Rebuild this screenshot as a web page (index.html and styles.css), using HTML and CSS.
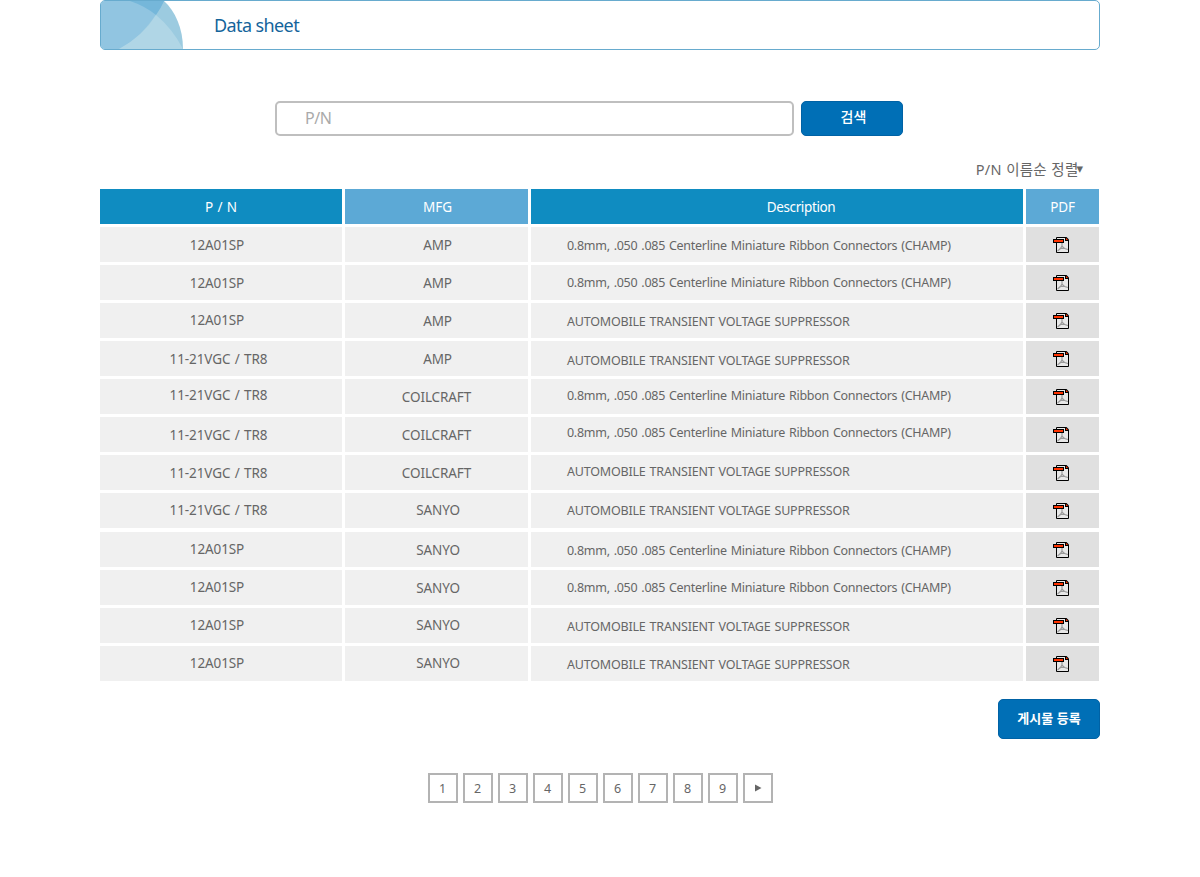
FILE: index.html
```html
<!DOCTYPE html>
<html lang="ko">
<head>
<meta charset="utf-8">
<title>Data sheet</title>
<link rel="stylesheet" href="styles.css">
</head>
<body>
<svg width="0" height="0" class="defs">
  <symbol id="pdf" viewBox="0 0 16 16">
    <path d="M3.5.5h9l3 3v12h-12z" fill="#e8e8e8" stroke="#000"/>
    <path d="M9 6v3Q8 12 4.500 14M9 9Q11 12 15 12.500M6.500 11.500H12" fill="none" stroke="#999" stroke-width="1.200"/>
    <path d="M12 0v4h4V2.500L13.500 0z" fill="#000"/>
    <path d="M13 1v2h2z" fill="#ff3300"/>
    <path d="M0 2h11v4H0z" fill="#000"/>
    <path d="M1 3h9v2H1z" fill="#ff3300"/>
  </symbol>
</svg>
<main class="page">
  <header class="title">
    <svg class="deco" width="84" height="48" viewBox="0 0 84 48">
      <path d="M0 0H63C74 10 82 27 82 48H0z" fill="#9ccbe0"/>
      <path d="M0 0H63C52 20 36 40 18 48H0z" fill="#91c5e1"/>
      <path d="M29 0H63Q60 7 55 14Q44 5 29 0z" fill="#75b7da"/>
      <path d="M55 14Q71 27 82 48H18Q42 35 55 14z" fill="#b0d6e6"/>
    </svg>
    <h1>Data sheet</h1>
  </header>
  <form class="search">
    <div class="field"><span>P/N</span></div>
    <button type="button" class="btn"><span>검색</span></button>
  </form>
  <div class="sort"><span>P/N 이름순 정렬</span><i>▾</i></div>
  <section class="table">
    <div class="row head"><div class="pn"><span>P / N</span></div><div class="mfg"><span>MFG</span></div><div class="desc"><span>Description</span></div><div class="file"><span>PDF</span></div></div>
    <div class="row"><div class="pn"><span>12A01SP</span></div><div class="mfg"><span>AMP</span></div><div class="desc"><span>0.8mm, .050 .085 Centerline Miniature Ribbon Connectors (CHAMP)</span></div><div class="file"><svg><use href="#pdf"/></svg></div></div>
    <div class="row"><div class="pn"><span>12A01SP</span></div><div class="mfg"><span>AMP</span></div><div class="desc up1"><span>0.8mm, .050 .085 Centerline Miniature Ribbon Connectors (CHAMP)</span></div><div class="file"><svg><use href="#pdf"/></svg></div></div>
    <div class="row"><div class="pn up1"><span>12A01SP</span></div><div class="mfg"><span>AMP</span></div><div class="desc caps"><span>AUTOMOBILE TRANSIENT VOLTAGE SUPPRESSOR</span></div><div class="file"><svg><use href="#pdf"/></svg></div></div>
    <div class="row"><div class="pn long"><span>11-21VGC / TR8</span></div><div class="mfg"><span>AMP</span></div><div class="desc caps down1"><span>AUTOMOBILE TRANSIENT VOLTAGE SUPPRESSOR</span></div><div class="file"><svg><use href="#pdf"/></svg></div></div>
    <div class="row"><div class="pn long up2"><span>11-21VGC / TR8</span></div><div class="mfg coil"><span>COILCRAFT</span></div><div class="desc up2"><span>0.8mm, .050 .085 Centerline Miniature Ribbon Connectors (CHAMP)</span></div><div class="file"><svg><use href="#pdf"/></svg></div></div>
    <div class="row"><div class="pn long"><span>11-21VGC / TR8</span></div><div class="mfg coil"><span>COILCRAFT</span></div><div class="desc up3"><span>0.8mm, .050 .085 Centerline Miniature Ribbon Connectors (CHAMP)</span></div><div class="file"><svg><use href="#pdf"/></svg></div></div>
    <div class="row"><div class="pn long"><span>11-21VGC / TR8</span></div><div class="mfg coil"><span>COILCRAFT</span></div><div class="desc caps up2"><span>AUTOMOBILE TRANSIENT VOLTAGE SUPPRESSOR</span></div><div class="file"><svg><use href="#pdf"/></svg></div></div>
    <div class="row split"><div class="pn long up1"><span>11-21VGC / TR8</span></div><div class="mfg sanyo up1"><span>SANYO</span></div><div class="desc caps up1"><span>AUTOMOBILE TRANSIENT VOLTAGE SUPPRESSOR</span></div><div class="file"><svg><use href="#pdf"/></svg></div></div>
    <div class="row"><div class="pn up1"><span>12A01SP</span></div><div class="mfg sanyo"><span>SANYO</span></div><div class="desc"><span>0.8mm, .050 .085 Centerline Miniature Ribbon Connectors (CHAMP)</span></div><div class="file"><svg><use href="#pdf"/></svg></div></div>
    <div class="row"><div class="pn up1"><span>12A01SP</span></div><div class="mfg sanyo"><span>SANYO</span></div><div class="desc up1"><span>0.8mm, .050 .085 Centerline Miniature Ribbon Connectors (CHAMP)</span></div><div class="file"><svg><use href="#pdf"/></svg></div></div>
    <div class="row"><div class="pn up1"><span>12A01SP</span></div><div class="mfg sanyo up1"><span>SANYO</span></div><div class="desc caps"><span>AUTOMOBILE TRANSIENT VOLTAGE SUPPRESSOR</span></div><div class="file"><svg><use href="#pdf"/></svg></div></div>
    <div class="row"><div class="pn up1"><span>12A01SP</span></div><div class="mfg sanyo up1"><span>SANYO</span></div><div class="desc caps"><span>AUTOMOBILE TRANSIENT VOLTAGE SUPPRESSOR</span></div><div class="file"><svg><use href="#pdf"/></svg></div></div>
  </section>
  <div class="actions"><button type="button" class="btn post"><span>게시물 등록</span></button></div>
  <nav class="pager"><a>1</a><a>2</a><a>3</a><a>4</a><a>5</a><a>6</a><a>7</a><a>8</a><a>9</a><a><svg width="7" height="8" viewBox="0 0 7 8"><path d="M0 .5 6.500 4 0 7.500z" fill="#666"/></svg></a></nav>
</main>
</body>
</html>
```

FILE: styles.css
```css
* { box-sizing: border-box; }
body {
  margin: 0;
  background: #fff;
  color: #666;
  font-family: "Noto Sans", "Noto Sans CJK KR", sans-serif;
  font-size: 13px;
}
.defs { display: block; }
.page { width: 1000px; margin: 0 auto; }
span { white-space: nowrap; }
.title {
  display: flex;
  align-items: center;
  height: 50px;
  border: 1px solid #67abce;
  border-radius: 5px;
  overflow: hidden;
}
.deco { display: block; flex: none; }
.title h1 {
  margin: 0 0 0 29px;
  font-size: 18px;
  font-weight: 400;
  line-height: 24px;
  letter-spacing: -0.6px;
  color: #14649b;
}
.search { display: flex; gap: 7px; margin: 51px 0 0 175px; }
.field {
  display: flex;
  align-items: center;
  width: 519px;
  height: 35px;
  padding: 0 0 2px 28px;
  border: 2px solid #bfbfbf;
  border-radius: 5px;
  color: #aaa;
  font-size: 16px;
  letter-spacing: -0.4px;
}
.btn {
  display: flex;
  align-items: center;
  justify-content: center;
  width: 102px;
  height: 35px;
  padding: 0 0 5px 3px;
  border: 1px solid #0062a5;
  border-radius: 5px;
  background: #006fb6;
  color: #fff;
  font: 500 14px/20px "Noto Sans CJK KR", sans-serif;
}
.sort {
  display: flex;
  justify-content: flex-end;
  align-items: center;
  height: 20px;
  margin: 22px 17px 0 0;
  font-size: 14.500px;
  letter-spacing: 0.2px;
  word-spacing: 0.6px;
}
.sort i { margin: 2px 0 0 -2px; font: 13px/20px "DejaVu Sans", sans-serif; letter-spacing: 0; }
.table { margin-top: 11px; }
.row {
  display: grid;
  grid-template-columns: 242px 183px 492px 73px;
  gap: 3px;
  height: 35px;
  margin-bottom: 3px;
}
.row.split { margin-bottom: 4px; }
.row > div {
  display: flex;
  align-items: center;
  justify-content: center;
  background: #f0f0f0;
  line-height: 18px;
  padding-top: 2px;
}
.row > .up1 { padding: 0; }
.row > .up2 { padding: 0 0 2px; }
.row > .up3 { padding: 0 0 4px; }
.row > .down1 { padding: 4px 0 0; }
.row > .pn { padding-right: 8px; }
.row > .long { padding-right: 5px; }
.row > .mfg { padding-left: 2px; }
.row > .coil { padding-left: 0; }
.row > .sanyo { padding-left: 3px; }
.pn span, .mfg span { margin-bottom: 2px; font-size: 13.500px; letter-spacing: -0.1px; }
.pn span { word-spacing: 1px; }
.row > .desc {
  justify-content: flex-start;
  padding-left: 36px;
  font-size: 12.500px;
  letter-spacing: -0.28px;
  word-spacing: 1px;
}
.row > .caps { letter-spacing: -0.2px; }
.row > .file { background: #e0e0e0; padding: 1px 3px 0 0; }
.file svg { width: 16px; height: 16px; }
.head > div { color: #fff; font-size: 13.500px; }
.row.head > .pn { background: #0f8cc1; padding-right: 0; }
.row.head > .mfg { background: #5ca9d6; }
.row.head > .desc {
  background: #0f8cc1;
  justify-content: center;
  padding: 0 0 0 48px;
  font-size: 13.500px;
  letter-spacing: -0.38px;
}
.row.head > .file { background: #5ca9d6; padding: 0; letter-spacing: -0.1px; }
.actions { display: flex; justify-content: flex-end; margin-top: 18px; }
.post { height: 40px; padding: 0 0 2px; font-weight: 700; font-size: 13px; }
.pager { display: flex; gap: 5px; margin: 34px 0 0 328px; }
.pager a {
  display: flex;
  align-items: center;
  justify-content: center;
  width: 30px;
  height: 30px;
  padding-right: 1px;
  border: 2px solid #b3b3b3;
  font-size: 12.500px;
}
.pager a:last-child { padding: 0 0 1px 1px; }
```
